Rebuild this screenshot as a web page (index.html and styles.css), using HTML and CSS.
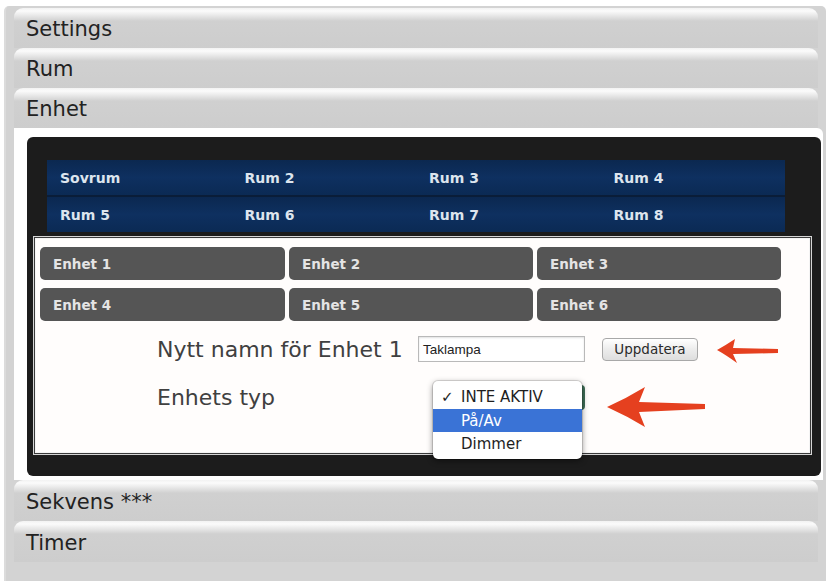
FILE: index.html
```html
<!DOCTYPE html>
<html lang="sv">
<head>
<meta charset="utf-8">
<title>Enhet</title>
<link rel="stylesheet" href="styles.css">
</head>
<body>
<div class="frame">
  <div class="acc-head">Settings</div>
  <div class="acc-head">Rum</div>
  <div class="acc-head">Enhet</div>
  <div class="panel">
    <div class="dark">
      <div class="rooms">
        <div class="room">Sovrum</div>
        <div class="room">Rum 2</div>
        <div class="room">Rum 3</div>
        <div class="room">Rum 4</div>
        <div class="room">Rum 5</div>
        <div class="room">Rum 6</div>
        <div class="room">Rum 7</div>
        <div class="room">Rum 8</div>
      </div>
      <div class="inner">
        <div class="units">
          <div class="unit">Enhet 1</div>
          <div class="unit">Enhet 2</div>
          <div class="unit">Enhet 3</div>
          <div class="unit">Enhet 4</div>
          <div class="unit">Enhet 5</div>
          <div class="unit">Enhet 6</div>
        </div>
        <div class="form-row">
          <div class="label name-label">Nytt namn för Enhet 1</div>
          <div class="text-input">Taklampa</div>
          <div class="btn">Uppdatera</div>
          <svg class="arrow-small" width="61" height="24" viewBox="0 0 61 24"><path d="M0 11 Q9 6 18 0 L16 9 L61 10 L61 14 L16 15 L20 24 Q9 16 0 11 Z" fill="#e5401f"/></svg>
        </div>
        <div class="form-row type-row">
          <div class="label type-label">Enhets typ</div>
          <div class="select">
            <div class="menu">
              <div class="opt"><span class="check">✓</span>INTE AKTIV</div>
              <div class="opt sel">På/Av</div>
              <div class="opt">Dimmer</div>
            </div>
          </div>
          <svg class="arrow-big" width="98" height="40" viewBox="0 0 98 40"><path d="M0 20 Q20 11 38 0 L32 15 L98 17 L98 22 L32 25 L38 40 Q20 29 0 20 Z" fill="#e5401f"/></svg>
        </div>
      </div>
    </div>
  </div>
  <div class="acc-head low">Sekvens ***</div>
  <div class="acc-head low">Timer</div>
</div>
</body>
</html>
```

FILE: styles.css
```css
* { box-sizing: border-box; }
html, body { margin: 0; padding: 0; background: #ffffff; }
body {
  font-family: "DejaVu Sans", Verdana, sans-serif;
  width: 829px;
  height: 581px;
  overflow: hidden;
}
.frame {
  margin: 6px 3px 0 4px;
  height: 575px;
  padding: 2px 8px 0 8px;
  background: #d3d3d3;
  border-left: 2px solid #dcdcdc;
  border-radius: 5px 5px 0 0;
}
.acc-head {
  height: 40px;
  display: flex;
  align-items: center;
  padding: 2px 0 0 12px;
  font-size: 21px;
  color: #222222;
  border-radius: 9px 9px 0 0;
  background: linear-gradient(to bottom, #f2f2f2 0, #fbfbfb 3px, #e6e6e6 8px, #d0d0d0 13px, #cdcdcd 100%);
}
.acc-head.low { height: 41px; }
.panel {
  background: #ffffff;
  margin-right: -5px;
  padding: 9px 2px 4px 13px;
  border-radius: 0 6px 0 0;
}
.dark {
  height: 339px;
  background: #1c1c1c;
  border-radius: 6px;
  padding: 23px 9px 21px 6px;
}
.rooms {
  display: grid;
  grid-template-columns: repeat(4, 1fr);
  row-gap: 2px;
  margin: 0 27px 4px 14px;
  background: #0a1d38;
}
.room {
  height: 35px;
  display: flex;
  align-items: center;
  padding-left: 13px;
  font-weight: bold;
  font-size: 14px;
  color: #dde5ee;
  background: linear-gradient(to bottom, #0b2850, #0e3060 50%, #0b2a54);
}
.inner {
  height: 219px;
  background: #fffdfc;
  border: 1px solid #d6d6d6;
  box-shadow: inset 0 0 0 1px #3a3a3a, inset 0 0 0 2px #f4f4f4;
  padding: 10px 30px 0 6px;
}
.units {
  display: grid;
  grid-template-columns: 245px 244px 244px;
  column-gap: 4px;
  row-gap: 8px;
}
.unit {
  height: 33px;
  display: flex;
  align-items: center;
  padding-left: 13px;
  font-weight: bold;
  font-size: 13.5px;
  color: #e4e4e4;
  background: #555555;
  border-radius: 5px;
}
.form-row {
  display: flex;
  align-items: center;
  margin-top: 15px;
  padding-left: 117px;
  height: 26px;
}
.label {
  font-size: 22px;
  color: #404040;
}
.name-label { width: 261px; }
.text-input {
  width: 167px;
  height: 26px;
  border: 1px solid #b9b9b9;
  box-shadow: inset 0 1px 2px rgba(0,0,0,0.12);
  background: #ffffff;
  font-family: "Liberation Sans", Arial, sans-serif;
  font-size: 13.5px;
  color: #222;
  display: flex;
  align-items: center;
  padding-left: 4px;
}
.btn {
  margin-left: 17px;
  width: 96px;
  height: 23px;
  border: 1px solid #a8a8a8;
  border-radius: 4px;
  background: linear-gradient(to bottom, #ffffff, #ececec 50%, #dedede);
  font-size: 13.5px;
  color: #2a2a2a;
  display: flex;
  align-items: center;
  justify-content: center;
}
.arrow-small { margin-left: 19px; margin-top: 4px; filter: blur(0.6px); }
.type-row { margin-top: 23px; height: 25px; }
.type-label { width: 277px; }
.select {
  position: relative;
  width: 151px;
  height: 25px;
  background: #ffffff;
  border-radius: 4px;
  border-right: 3px solid #3f6e57;
}
.menu {
  position: absolute;
  left: -1px;
  top: -4px;
  width: 149px;
  height: 78px;
  background: #ffffff;
  border-radius: 5px;
  box-shadow: 0 2px 6px rgba(0,0,0,0.45), 0 0 0 1px rgba(0,0,0,0.12);
  padding-top: 4px;
}
.opt {
  height: 24px;
  display: flex;
  align-items: center;
  padding-left: 28px;
  position: relative;
  font-size: 15px;
  color: #1e1e1e;
}
.opt.sel {
  height: 23px;
  background: #3a73d6;
  color: #ffffff;
}
.check {
  position: absolute;
  left: 8px;
  font-size: 15px;
  font-weight: bold;
}
.arrow-big { margin-left: 22px; margin-top: 19px; filter: blur(0.7px); }
```
